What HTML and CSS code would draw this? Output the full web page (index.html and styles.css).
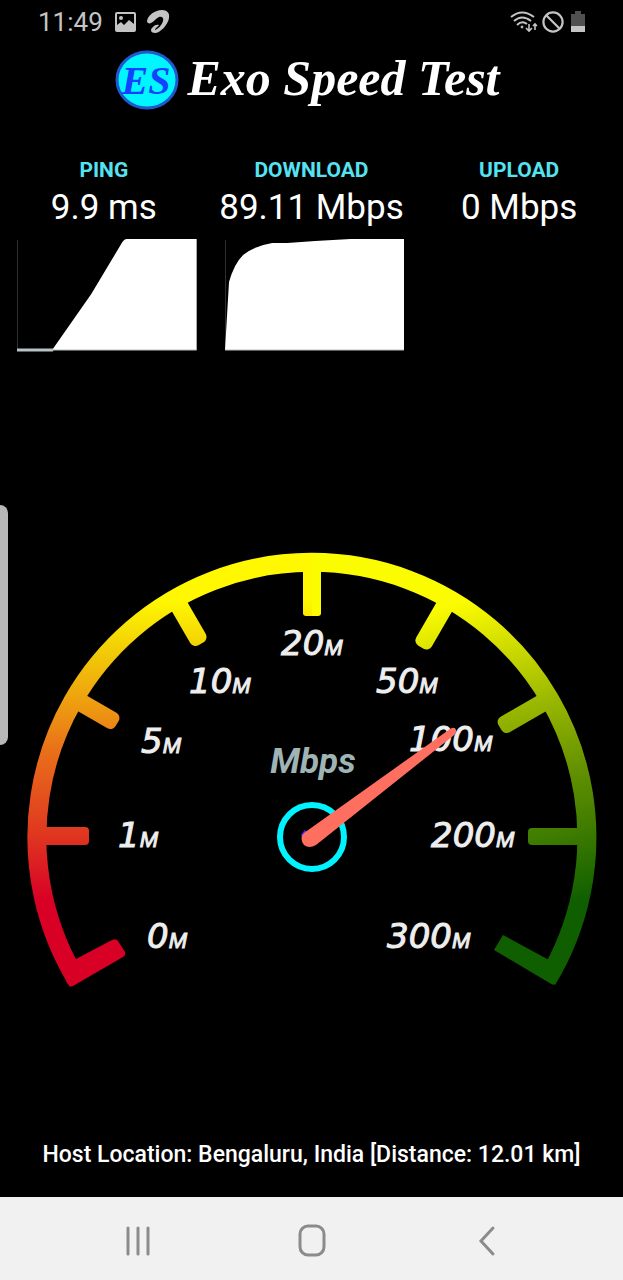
FILE: index.html
```html
<!DOCTYPE html>
<html lang="en">
<head>
<meta charset="utf-8">
<meta name="viewport" content="width=device-width, initial-scale=1">
<title>Exo Speed Test</title>
<link rel="stylesheet" href="styles.css">
</head>
<body>
<div class="status">
  <div class="status-group">
    <time class="clock">11:49</time>
    <svg class="icon-photo" width="21" height="20" viewBox="0 0 21 20"><path fill="#c4c4c4" fill-rule="evenodd" d="M2 0H19Q21 0 21 2V18Q21 20 19 20H2Q0 20 0 18V2Q0 0 2 0ZM2 2V13L6 10L9 13L14 8L19 12V2ZM6 4A2 2 0 1 1 6 8A2 2 0 1 1 6 4Z"/></svg>
    <svg class="icon-swirl" width="23" height="24" viewBox="0 0 23 24"><path fill="#c4c4c4" d="M0 11C1 5 8 0 15 0C20 0 23 3 22 8C21 15 13 23 8 23C4 23 3 20 5 18C7 15 10 14 12 15C11 17 8 18 8 20C11 19 15 15 16 11C17 8 15 6 12 7C9 8 7 12 4 13C2 14 0 13 0 11Z"/></svg>
  </div>
  <div class="status-group">
    <svg width="28" height="22" viewBox="0 0 28 22" fill="none" stroke="#c4c4c4" stroke-width="2"><path d="M1 6Q12 -3 24 6M4 10Q12 3 21 10M7 14Q12 9 17 13"/><circle cx="12" cy="16" r="1" fill="#c4c4c4" stroke-width="1"/><path d="M19 13V20M16 17L19 20L22 17M25 19V13M23 15L25 13L27 15" stroke-width="1.6"/></svg>
    <svg width="22" height="22" viewBox="0 0 22 22" fill="none" stroke="#c4c4c4" stroke-width="2.2"><circle cx="11" cy="11" r="9.6"/><path d="M4 4L18 18"/></svg>
    <svg class="icon-battery" width="14" height="22" viewBox="0 0 14 22"><path fill="#505050" d="M4 0H10V3H14V16H0V3H4Z"/><path fill="#c4c4c4" d="M0 15H14V21H0Z"/></svg>
  </div>
</div>

<header class="brand">
  <svg class="badge" width="64" height="60" viewBox="0 0 64 60" aria-hidden="true"><ellipse cx="32" cy="30" rx="30" ry="28" fill="#00f6ff" stroke="#2058d0" stroke-width="3"/><text class="badge-text" x="31" y="44" text-anchor="middle">ES</text></svg>
  <h1 class="title">Exo Speed Test</h1>
</header>

<main class="content">
  <section class="metrics">
    <div class="metric">
      <h2 class="label">PING</h2>
      <p class="value">9.9 ms</p>
      <svg class="chart" viewBox="0 0 179 113" preserveAspectRatio="none"><path d="M0.5 1V111" stroke="#2c3030"/><path fill="#fff" d="M35 111L74 55L105 3Q107 0 109 0H179V111Z"/><path d="M0 111H179" stroke="#b8c0c0"/><path d="M0 111H36" stroke="#b8c4c4" stroke-width="3"/></svg>
    </div>
    <div class="metric">
      <h2 class="label">DOWNLOAD</h2>
      <p class="value">89.11 Mbps</p>
      <svg class="chart" viewBox="0 0 179 113" preserveAspectRatio="none"><path d="M0.5 1V111" stroke="#2c3030"/><path fill="#fff" d="M0 111L4 43Q9 25 18 16Q29 7 47 4L62 4L90 2L125 0H179V111Z"/><path d="M0 111H179" stroke="#b8c0c0"/></svg>
    </div>
    <div class="metric">
      <h2 class="label">UPLOAD</h2>
      <p class="value">0 Mbps</p>
    </div>
  </section>

  <svg class="gauge" viewBox="0 540 623 460" role="img" aria-label="Speed gauge in Mbps">
    <defs>
      <linearGradient id="low" gradientUnits="userSpaceOnUse" x1="0" y1="900" x2="0" y2="600">
        <stop offset="0" stop-color="#d90026"/>
        <stop offset=".22" stop-color="#df3720"/>
        <stop offset=".5" stop-color="#e9701a"/>
        <stop offset=".65" stop-color="#ee9c10"/>
        <stop offset=".84" stop-color="#f2cf06"/>
        <stop offset="1" stop-color="#fff800"/>
      </linearGradient>
      <linearGradient id="high" gradientUnits="userSpaceOnUse" x1="470" y1="600" x2="540" y2="910">
        <stop offset="0" stop-color="#fcfc00"/>
        <stop offset=".15" stop-color="#d4df00"/>
        <stop offset=".36" stop-color="#9bb800"/>
        <stop offset=".6" stop-color="#629000"/>
        <stop offset=".78" stop-color="#3f7c00"/>
        <stop offset="1" stop-color="#0f5f00"/>
      </linearGradient>
      <mask id="dial" maskUnits="userSpaceOnUse" x="0" y="540" width="623" height="460">
        <path d="M78 982A275 275 0 1 1 547 980" fill="none" stroke="#fff" stroke-width="19"/>
        <g fill="#fff">
          <path d="M66 981L76 959L112 940Q116 938 118 941L125 952Q126 955 123 957L73 986Q70 987 68 984Z"/>
          <path d="M557 979L549 960L503 935L494 950L553 985Z"/>
          <rect x="32" y="827" width="57" height="18" rx="4"/>
          <rect x="32" y="827" width="55" height="18" rx="6" transform="rotate(30 312 836)"/>
          <rect x="32" y="827" width="58" height="18" rx="6" transform="rotate(60 312 836)"/>
          <rect x="32" y="827" width="60" height="18" rx="3" transform="rotate(90 312 836)"/>
          <rect x="32" y="827" width="62" height="18" rx="6" transform="rotate(120 312 836)"/>
          <rect x="32" y="827" width="63" height="18" rx="6" transform="rotate(150 312 836)"/>
          <rect x="528" y="828" width="64" height="17" rx="4"/>
        </g>
      </mask>
    </defs>
    <g mask="url(#dial)">
      <rect x="0" y="540" width="313" height="460" fill="url(#low)"/>
      <rect x="312" y="540" width="311" height="460" fill="url(#high)"/>
    </g>
    <g class="marks">
      <text x="147" y="948">0<tspan class="unit">M</tspan></text>
      <text x="118" y="847">1<tspan class="unit">M</tspan></text>
      <text x="141" y="753">5<tspan class="unit">M</tspan></text>
      <text x="189" y="693">10<tspan class="unit">M</tspan></text>
      <text x="281" y="655">20<tspan class="unit">M</tspan></text>
      <text x="376" y="693">50<tspan class="unit">M</tspan></text>
      <text x="409" y="751">100<tspan class="unit">M</tspan></text>
      <text x="431" y="847">200<tspan class="unit">M</tspan></text>
      <text x="387" y="948">300<tspan class="unit">M</tspan></text>
    </g>
    <text class="dial-unit" x="313" y="773" text-anchor="middle">Mbps</text>
    <circle cx="312" cy="837" r="32" fill="none" stroke="#00f4ff" stroke-width="6"/>
    <path d="M302 836L306 831" stroke="#4b20ff" stroke-width="3"/>
    <path fill="#ff6f60" d="M304 833L450 729Q455 726 456 730Q457 733 453 736L316 845Q309 849 304 845Q299 838 304 833Z"/>
  </svg>

  <p class="host">Host Location: Bengaluru, India [Distance: 12.01 km]</p>
</main>

<nav class="navbar">
  <button class="nav-button" type="button" aria-label="Recent apps"><svg width="28" height="32" viewBox="0 0 28 32" fill="none" stroke="#8b8b8b" stroke-width="3" stroke-linecap="round"><path d="M4 3V29M14 3V29M24 3V29"/></svg></button>
  <button class="nav-button" type="button" aria-label="Home"><svg width="28" height="34" viewBox="0 0 28 34" fill="none" stroke="#8b8b8b" stroke-width="3"><rect x="2" y="2" width="24" height="29" rx="8"/></svg></button>
  <button class="nav-button" type="button" aria-label="Back"><svg width="28" height="32" viewBox="0 0 28 32" fill="none" stroke="#8b8b8b" stroke-width="3" stroke-linecap="round"><path d="M20 3L8 16L20 29"/></svg></button>
</nav>
<div class="edge-handle"></div>
</body>
</html>
```
FILE: styles.css
```css
* {
  box-sizing: border-box;
}

body {
  margin: 0;
  min-height: 100vh;
  display: flex;
  flex-direction: column;
  position: relative;
  background: #000;
  color: #fff;
  font-family: Roboto, "Liberation Sans", sans-serif;
}

h1, h2, p {
  margin: 0;
}

svg {
  display: block;
  flex: none;
}

.status {
  height: 44px;
  padding: 0 38px;
  display: flex;
  justify-content: space-between;
  align-items: center;
}

.status-group {
  display: flex;
  align-items: center;
  gap: 4px;
}

.clock {
  color: #c4c4c4;
  font-size: 26px;
  line-height: 32px;
}

.icon-photo {
  margin-left: 8px;
}

.icon-swirl {
  margin-left: 7px;
}

.icon-battery {
  margin-left: 3px;
}

.brand {
  height: 72px;
  padding-right: 8px;
  display: flex;
  justify-content: center;
  align-items: center;
  gap: 8px;
}

.title {
  padding-bottom: 4px;
  font: italic bold 50px/60px "Liberation Serif", cursive;
}

.badge-text {
  fill: #1440ff;
  font: italic bold 40px "Liberation Serif", cursive;
}

.content {
  flex: 1;
  display: flex;
  flex-direction: column;
  padding-top: 40px;
}

.metrics {
  display: grid;
  grid-template-columns: repeat(3, 1fr);
}

.metric {
  text-align: center;
}

.label {
  color: #55e3f2;
  font-size: 21px;
  font-weight: 700;
  line-height: 28px;
}

.value {
  font-size: 35px;
  line-height: 48px;
  white-space: nowrap;
}

.chart {
  width: calc(100% - 28px);
  height: 113px;
  margin: 7px 0 0 17px;
}

.gauge {
  width: 100%;
  height: auto;
  margin-top: 188px;
}

.marks {
  fill: #eee;
  stroke: #eee;
  stroke-width: 1px;
  font: italic 34px "DejaVu Sans", sans-serif;
}

.unit {
  font: italic 22px "Liberation Sans", sans-serif;
}

.dial-unit {
  fill: #9fb4b4;
  font: italic 700 35px Roboto, sans-serif;
}

.host {
  margin-top: auto;
  padding: 0 24px 28px;
  text-align: center;
  font-size: 23px;
  font-weight: 500;
  line-height: 28px;
}

.navbar {
  height: 83px;
  padding: 0 49px 0 51px;
  display: grid;
  grid-template-columns: repeat(3, 1fr);
  background: #f1f1f1;
}

.nav-button {
  display: flex;
  justify-content: center;
  align-items: center;
  padding: 4px 0 0;
  border: 0;
  background: none;
}

.edge-handle {
  position: absolute;
  left: 0;
  top: 505px;
  width: 8px;
  height: 240px;
  border-radius: 0 8px 8px 0;
  background: #b8b8b8;
}
```
